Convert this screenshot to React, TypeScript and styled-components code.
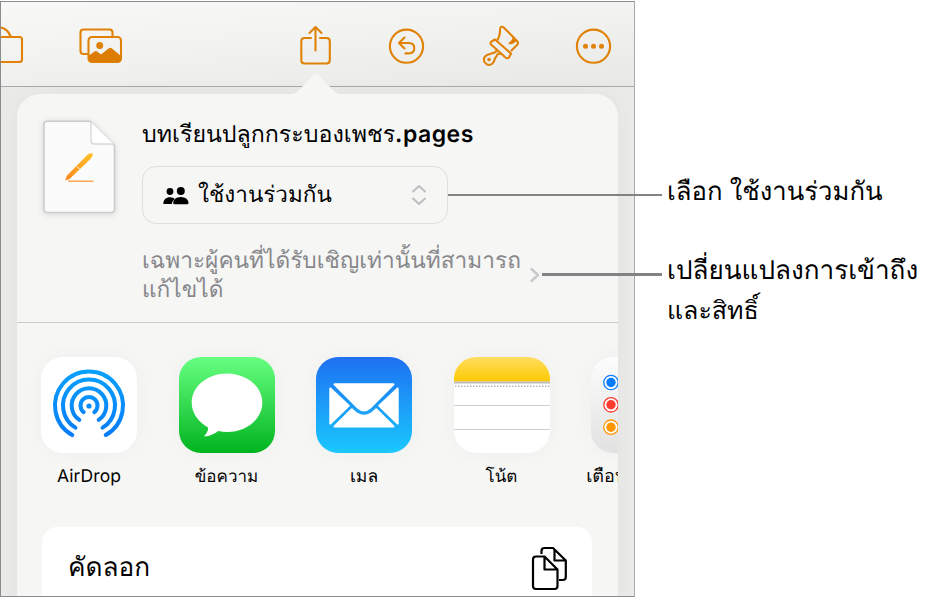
import React from 'react';
import styled, { createGlobalStyle } from 'styled-components';

const Global = createGlobalStyle`
  * { box-sizing: border-box; }
  body { margin: 0; background: #fff; }
`;

const Page = styled.main`
  position: relative;
  display: flex;
  width: 932px;
  height: 598px;
  padding-top: 1px;
  overflow: hidden;
  background: #fff;
  font-family: Inter, 'Noto Sans', sans-serif;
  text-rendering: geometricPrecision;
  color: #000;
`;

const Device = styled.section`
  position: relative;
  width: 635px;
  height: 596px;
  flex: none;
  border: 1px solid #8c8c8e;
  border-right: 1.5px solid #a9a9ab;
  background: #eaeae9;
  overflow: hidden;
`;

const Toolbar = styled.header`
  display: flex;
  height: 85px;
  padding-top: 22px;
  border-bottom: 1px solid #a9a9a9;
  background: linear-gradient(175deg, #f8f8f7 0%, #f2f2f1 45%, #e8e8e7 100%);
`;

const ToolButton = styled.button<{ $gap?: number }>`
  flex: none;
  height: 44px;
  margin: 0 0 0 ${p => p.$gap ?? 0}px;
  padding: 0;
  border: 0;
  background: none;
  svg { display: block; fill: none; stroke: #e08205; stroke-width: 2.1; stroke-linecap: round; stroke-linejoin: round; }
`;

const Popover = styled.div`
  position: absolute;
  left: 16px;
  top: 92px;
  width: 601px;
  height: 520px;
  border-radius: 23px 23px 0 0;
  background: #f6f6f5;
  box-shadow: 0 0 22px rgba(0, 0, 0, 0.035);
`;

const Arrow = styled.svg`
  position: absolute;
  left: 271px;
  top: -22px;
`;

const PopoverContent = styled.div`
  height: 100%;
  overflow: hidden;
  border-radius: inherit;
`;

const DocHeader = styled.div`
  display: flex;
  height: 229px;
  padding: 20px 0 0 19px;
  border-bottom: 1px solid #c9c9cb;
`;

const DocIcon = styled.svg`
  flex: none;
  width: 84px;
  height: 108px;
`;

const Sheet = styled.path`
  fill: #fbfbfb;
  stroke: #cbcbcc;
  stroke-width: 1.6;
  filter: drop-shadow(0 1px 3px rgba(0, 0, 0, 0.13));
`;

const DocInfo = styled.div`
  display: flex;
  flex-direction: column;
  margin-left: 22px;
`;

const Title = styled.div`
  height: 40px;
  line-height: 40px;
  white-space: nowrap;
`;

const Text = styled.span<{ $size: number; $spacing?: number; $weight?: number; $color?: string }>`
  font-size: ${p => p.$size}px;
  letter-spacing: ${p => p.$spacing ?? 0}px;
  font-weight: ${p => p.$weight ?? 400};
  color: ${p => p.$color ?? '#000'};
  white-space: nowrap;
`;

const Select = styled.button`
  display: flex;
  align-items: center;
  width: 306px;
  height: 58px;
  margin: 12px 0 0;
  padding: 0 20px 0 20px;
  border: 1.5px solid #dededf;
  border-radius: 14px;
  background: transparent;
  font-family: inherit;
  text-rendering: inherit;
`;

const SelectLabel = styled.div`
  flex: 1;
  margin: 2px 0 0 9px;
  text-align: left;
  line-height: 50px;
`;

const AccessRow = styled.div`
  display: flex;
  margin-top: 22px;
`;

const AccessText = styled.div`
  display: flex;
  flex-direction: column;
  width: 388px;
  line-height: 29px;
`;

const Chevron = styled.svg`
  margin-top: 21px;
  fill: none;
  stroke: #c9c9cb;
  stroke-width: 2.4;
  stroke-linecap: round;
  stroke-linejoin: round;
`;

const Apps = styled.div`
  display: flex;
  gap: 41.5px;
  padding: 34px 0 0 24px;
`;

const AppItem = styled.div`
  display: flex;
  flex-direction: column;
  align-items: center;
  flex: none;
  width: 96px;
`;

const AppTile = styled.div`
  width: 96px;
  height: 96px;
  border-radius: 22px;
  box-shadow: 0 0 20px rgba(0, 0, 0, 0.035);
  svg { display: block; }
`;

const AppLabel = styled.div`
  height: 40px;
  line-height: 40px;
  margin-top: 3px;
`;

const ActionRow = styled.div`
  display: flex;
  justify-content: space-between;
  width: 550px;
  height: 100px;
  margin: 31px 0 0 25px;
  padding: 16px 23px 0 26px;
  border-radius: 15px;
  background: #fff;
  line-height: 50px;
`;

const CopyIcon = styled.svg`
  fill: none;
  stroke: #000;
  stroke-width: 2.2;
  stroke-linejoin: round;
`;

const Notes = styled.aside`
  display: flex;
  flex-direction: column;
  padding: 171px 0 0 32px;
  line-height: 40px;
`;

const Note = styled.div`
  display: flex;
  flex-direction: column;
  & + & { margin-top: 39px; }
`;

const Leader = styled.div<{ $x: number; $y: number }>`
  position: absolute;
  left: ${p => p.$x}px;
  top: ${p => p.$y}px;
  width: ${p => 662 - p.$x}px;
  height: 2.5px;
  background: #828282;
`;

const arcs = [8.5, 17.3, 26, 34].map((r, i) => {
  const a = [39, 34, 31.5, 29.5][i] * Math.PI / 180;
  const x = r * Math.sin(a);
  const y = r * Math.cos(a);
  return `M${48 - x} ${48.5 + y}A${r} ${r} 0 1 1 ${48 + x} ${48.5 + y}`;
});

const AirDropIcon = () => (
  <svg width="96" height="96">
    <defs><linearGradient id="air" gradientUnits="userSpaceOnUse" x1="0" y1="14" x2="0" y2="82"><stop stopColor="#08a0fb" /><stop offset="1" stopColor="#087af8" /></linearGradient></defs>
    <rect width="96" height="96" rx="22" fill="#fff" />
    {arcs.map(d => <path key={d} d={d} fill="none" stroke="url(#air)" strokeWidth="4" strokeLinecap="round" />)}
    <circle cx="48" cy="49" r="2.6" fill="#078bf9" />
  </svg>
);

const MessagesIcon = () => (
  <svg width="96" height="96">
    <defs><linearGradient id="msg" x2="0" y2="1"><stop stopColor="#67ff81" /><stop offset="1" stopColor="#01b41f" /></linearGradient></defs>
    <rect width="96" height="96" rx="22" fill="url(#msg)" />
    <path d="M48 16.5C28.5 16.5 12.7 29.5 12.7 45.700C12.700 56 19.500 65 29 70.500C29.500 74 27.500 76.500 25 79.500C31 79.300 36 76.500 39 74C42 74.700 45 75 48 75C67.500 75 83.300 61.900 83.300 45.700C83.300 29.500 67.500 16.500 48 16.500Z" fill="#fff" />
  </svg>
);

const MailIcon = () => (
  <svg width="96" height="96">
    <defs><linearGradient id="mail" gradientUnits="userSpaceOnUse" x1="0" y1="0" x2="0" y2="96"><stop stopColor="#1e70f2" /><stop offset="1" stopColor="#1ac8fd" /></linearGradient></defs>
    <rect width="96" height="96" rx="22" fill="url(#mail)" />
    <g fill="#fff" stroke="#fff" strokeWidth="2" strokeLinejoin="round">
      <path d="M18.500 27.300H77.500L54.300 50.500Q48 56.300 41.700 50.500Z" />
      <path d="M14.300 31.500L32.700 48.700L14.300 66.500Z" />
      <path d="M81.700 31.500L63.300 48.700L81.700 66.500Z" />
      <path d="M18.500 69.500L35.800 52.300L38.500 54.800Q48 63 57.500 54.800L60.200 52.300L77.500 69.500Z" />
    </g>
  </svg>
);

const NotesIcon = () => (
  <svg width="96" height="96">
    <defs>
      <linearGradient id="note" x2="0" y2="1"><stop stopColor="#ffdd61" /><stop offset="1" stopColor="#fdc900" /></linearGradient>
      <clipPath id="noteClip"><rect width="96" height="96" rx="22" /></clipPath>
    </defs>
    <g clipPath="url(#noteClip)">
      <rect width="96" height="96" fill="#fff" />
      <rect width="96" height="24.500" fill="url(#note)" />
      <rect y="24.500" width="96" height="2" fill="#bcbab3" />
      <path d="M1 29.300H96" stroke="#b6b6b6" strokeWidth="1.500" strokeDasharray="1.500 1.500" />
      <path d="M0 48.500H96M0 72.500H96" stroke="#d0d0d2" />
    </g>
  </svg>
);

const RemindersIcon = () => (
  <svg width="96" height="96">
    <defs><linearGradient id="rem" x2="0" y2="1"><stop stopColor="#fdfdfd" /><stop offset="1" stopColor="#e1e1e2" /></linearGradient></defs>
    <rect width="96" height="96" rx="22" fill="url(#rem)" />
    {[{ c: '#0a7cff', y: 25.5 }, { c: '#ff3b30', y: 47.8 }, { c: '#ff9500', y: 70.2 }].map(({ c, y }) => (
      <g key={c}>
        <circle cx="20" cy={y} r="7.200" fill="#fff" stroke={c} strokeWidth="1.300" />
        <circle cx="20" cy={y} r="4.700" fill={c} />
      </g>
    ))}
  </svg>
);

const apps = [
  { name: 'AirDrop', Icon: AirDropIcon, size: 17.5, spacing: 0.1 },
  { name: 'ข้อความ', Icon: MessagesIcon, size: 17 },
  { name: 'เมล', Icon: MailIcon, size: 17.5 },
  { name: 'โน้ต', Icon: NotesIcon, size: 17 },
  { name: 'เตือนความจำ', Icon: RemindersIcon, size: 18 },
];

export default function App() {
  return (
    <>
      <Global />
      <Page>
        <Device>
          <Toolbar>
            <ToolButton>
              <svg width="23" height="44" viewBox="1 24 23 44"><path d="M-10 37H19.500Q22 37 22 39.500V59.500Q22 62 19.500 62H-10M0 27.500Q7 28 10.500 36" /></svg>
            </ToolButton>
            <ToolButton $gap={54}>
              <svg width="46" height="44" viewBox="78 24 46 44">
                <path d="M87 54H83.500Q80.500 54 80.500 51V32.500Q80.500 29.500 83.500 29.500H109.500Q112.500 29.500 112.500 32.500V36" />
                <rect x="88.500" y="37" width="32.500" height="25" rx="3.500" />
                <path d="M89 55.500L94.500 51.500Q96 50.500 97.500 51.700L101 54.500L108.500 48.500Q110.300 47 112 48.500L121 56V59Q121 62 118 62H91.500Q88.500 62 88.500 59Z" fill="#dc7c02" stroke="none" />
                <circle cx="99.700" cy="45.400" r="3.500" fill="#e08205" stroke="none" />
              </svg>
            </ToolButton>
            <ToolButton $gap={174}>
              <svg width="36" height="44" viewBox="298 24 36 44"><path d="M311 38H304.500Q301.300 38 301.300 41.200V60.300Q301.300 63.500 304.500 63.500H326.500Q329.800 63.500 329.800 60.300V41.200Q329.800 38 326.500 38H320M315.500 50.500V27.500M309.500 33L315.500 27L321.500 33" /></svg>
            </ToolButton>
            <ToolButton $gap={53}>
              <svg width="40" height="44" viewBox="387 24 40 44"><circle cx="406.500" cy="46.200" r="16.600" /><path d="M404.500 37.500L399 43L404.500 48.500M399.500 43H408.500Q414.300 43 414.300 48.200T408.500 53.400H405.500" /></svg>
            </ToolButton>
            <ToolButton $gap={54}>
              <svg width="42" height="44" viewBox="481 24 42 44">
                <path d="M497 40.500Q500.300 36 500 30Q500 25 504 27.700L517 41Q519 43 517 45L511.500 50.500" />
                <path d="M495 39.500L511 53.500L509 57.500Q507.300 59 505.500 57.500L491 44.500Q489.700 43 491.500 41.500Z" />
                <path d="M496.500 49.500Q497 52 494.500 52.500L487 55Q482.500 57.500 484.500 62Q488 67 492.500 63.500Q494 62 495 58.500L497.500 54.500Q499 53 501.500 54" />
                <path d="M513 37.500Q513.500 40 509 43.500Q511.500 44.500 516 41Z" fill="#dc7c02" strokeWidth="1.200" />
                <circle cx="489" cy="59.600" r="1.800" fill="#e08205" stroke="none" />
              </svg>
            </ToolButton>
            <ToolButton $gap={51}>
              <svg width="40" height="44" viewBox="574 24 40 44"><circle cx="593.500" cy="46.200" r="16.600" /><g fill="#e08205" stroke="none"><circle cx="585.500" cy="46.200" r="2.500" /><circle cx="593.500" cy="46.200" r="2.500" /><circle cx="601.500" cy="46.200" r="2.500" /></g></svg>
            </ToolButton>
          </Toolbar>
          <Popover>
            <Arrow width="56" height="24"><path d="M0 23C7 22 9 20 13 16L24 4Q28 -1 32 4L43 16C47 20 49 22 56 23V24H0Z" fill="#f6f6f5" /></Arrow>
            <PopoverContent>
              <DocHeader>
                <DocIcon viewBox="36 114 84 108">
                  <defs><linearGradient id="pen" x1="1" y1="0" x2="0" y2="1"><stop stopColor="#ffc229" /><stop offset="1" stopColor="#ff861d" /></linearGradient></defs>
                  <Sheet d="M47 121.200H90L114.500 145.500V209.500Q114.500 212.500 111.500 212.500H47Q44 212.500 44 209.500V124.200Q44 121.200 47 121.200Z" />
                  <path d="M91 122V140.500Q91 144 94.500 144H113.500" fill="#fff" stroke="#d8d8d9" strokeWidth="1.400" />
                  <path d="M65 180.500L67 175.500L88 154.300Q91 152.500 93 153.800Q93 156 90.500 159L69.500 179Z" fill="url(#pen)" />
                  <path d="M77 166.500L79.500 169" stroke="#fff" /><path d="M68 181.200H93.500" stroke="#ffa65b" strokeWidth="1.600" />
                </DocIcon>
                <DocInfo>
                  <Title><Text $size={23.2}>บทเรียนปลูกกระบองเพชร</Text><Text $size={23} $spacing={0.5} $weight={600}>.pages</Text></Title>
                  <Select>
                    <svg width="26" height="20" viewBox="163 185 26 20"><circle cx="170" cy="191.500" r="3.400" /><circle cx="180.800" cy="191" r="4" /><path d="M163.300 203.800C163.300 200 166 197.300 170 197.300C172.300 197.300 173.800 198 174.800 199C173 200.500 172 202 171.800 204.100H164Z" /><path d="M173.200 203C173.200 199.800 176 197 180.800 197S188.500 199.800 188.500 203Q188.500 204.200 187 204.200H174.700Q173.200 204.200 173.200 203Z" /></svg>
                    <SelectLabel><Text $size={22.5}>ใช้งานร่วมกัน</Text></SelectLabel>
                    <svg width="16" height="22" viewBox="0 0 16 22" fill="none" stroke="#bdbdbf" strokeWidth="2" strokeLinecap="round" strokeLinejoin="round"><path d="M2 7.500L8 2L14 7.500M2 14.500L8 20L14 14.500" /></svg>
                  </Select>
                  <AccessRow>
                    <AccessText><Text $size={22.7} $color="#88888c">เฉพาะผู้คนที่ได้รับเชิญเท่านั้นที่สามารถ</Text><Text $size={22.7} $color="#88888c">แก้ไขได้</Text></AccessText>
                    <Chevron width="10" height="16" viewBox="0 0 10 16"><path d="M1.500 2L8 8L1.500 14" /></Chevron>
                  </AccessRow>
                </DocInfo>
              </DocHeader>
              <Apps>
                {apps.map(({ name, Icon, size, spacing }) => (
                  <AppItem key={name}><AppTile><Icon /></AppTile><AppLabel><Text $size={size} $spacing={spacing}>{name}</Text></AppLabel></AppItem>
                ))}
              </Apps>
              <ActionRow>
                <Text $size={26.2}>คัดลอก</Text>
                <CopyIcon width="40" height="48" viewBox="529 543 40 48"><path d="M541.500 554V551Q541.500 548 544.500 548H553L565.800 560.500V577Q565.800 580 562.800 580H559M554.500 549V560.500H565.800M536 556.500H544.500L557.500 569.500V586Q557.500 589 554.500 589H536Q533 589 533 586V559.500Q533 556.500 536 556.500ZM544.500 557V569.500H557" /></CopyIcon>
              </ActionRow>
            </PopoverContent>
          </Popover>
        </Device>
        <Notes>
          <Note><Text $size={25.7}>เลือก ใช้งานร่วมกัน</Text></Note>
          <Note><Text $size={26.1}>เปลี่ยนแปลงการเข้าถึง</Text><Text $size={25}>และสิทธิ์</Text></Note>
        </Notes>
        <Leader $x={448} $y={193.5} />
        <Leader $x={542} $y={273} />
      </Page>
    </>
  );
}
